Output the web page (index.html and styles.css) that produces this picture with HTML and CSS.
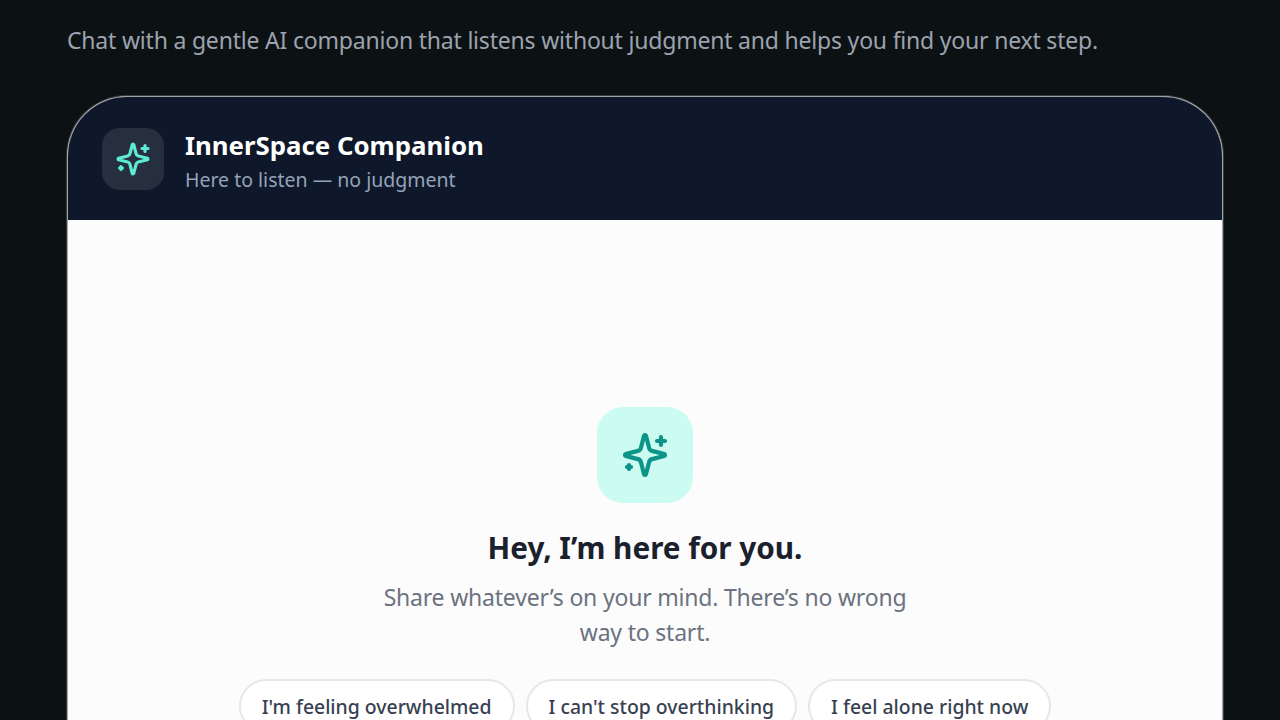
FILE: index.html
```html
<!DOCTYPE html>
<html lang="en">
<head>
<meta charset="utf-8">
<title>InnerSpace Companion</title>
<link rel="stylesheet" href="styles.css">
</head>
<body>
<main class="page">
  <p class="intro">Chat with a gentle AI companion that listens without judgment and helps you find your next step.</p>
  <section class="chat">
    <header class="chat-head">
      <div class="avatar">
        <svg class="spark" viewBox="0 0 24 24"><path d="M9.937 15.5A2 2 0 0 0 8.5 14.063l-6.135-1.582a.5.5 0 0 1 0-.962L8.5 9.936A2 2 0 0 0 9.937 8.5l1.582-6.135a.5.5 0 0 1 .963 0L14.063 8.5A2 2 0 0 0 15.5 9.937l6.135 1.581a.5.5 0 0 1 0 .964L15.5 14.063a2 2 0 0 0-1.437 1.437l-1.582 6.135a.5.5 0 0 1-.963 0z"/><path d="M20 3v4"/><path d="M22 5h-4"/><path d="M4 17v2"/><path d="M5 18H3"/></svg>
      </div>
      <div class="head-text">
        <h1 class="head-title">InnerSpace Companion</h1>
        <p class="head-sub">Here to listen — no judgment</p>
      </div>
    </header>
    <div class="chat-body">
      <div class="hero-icon">
        <svg class="spark spark-lg" viewBox="0 0 24 24"><path d="M9.937 15.5A2 2 0 0 0 8.5 14.063l-6.135-1.582a.5.5 0 0 1 0-.962L8.5 9.936A2 2 0 0 0 9.937 8.5l1.582-6.135a.5.5 0 0 1 .963 0L14.063 8.5A2 2 0 0 0 15.5 9.937l6.135 1.581a.5.5 0 0 1 0 .964L15.5 14.063a2 2 0 0 0-1.437 1.437l-1.582 6.135a.5.5 0 0 1-.963 0z"/><path d="M20 3v4"/><path d="M22 5h-4"/><path d="M4 17v2"/><path d="M5 18H3"/></svg>
      </div>
      <h2 class="hero-title">Hey, I’m here for you.</h2>
      <p class="hero-sub">Share whatever’s on your mind. There’s no wrong way to start.</p>
      <div class="chips">
        <button class="chip">I'm feeling overwhelmed</button>
        <button class="chip">I can't stop overthinking</button>
        <button class="chip">I feel alone right now</button>
      </div>
    </div>
  </section>
</main>
</body>
</html>
```
FILE: styles.css
```css
* { box-sizing: border-box; }
html, body {
  margin: 0;
  height: 720px;
  overflow: hidden;
  background: #0c1214;
  font-family: "Noto Sans", "Open Sans", sans-serif;
}
.page { padding: 22px 57px 0 67px; }
.intro {
  margin: 0 0 38px;
  font-size: 23px;
  letter-spacing: -0.2px;
  line-height: 36px;
  color: #9ca3af;
}
.chat {
  height: 800px;
  border: 1px solid #a0a3a6;
  border-bottom: 0;
  border-radius: 60px 60px 0 0;
  overflow: hidden;
  background: #fcfcfc;
  box-shadow: 0 0 0 1px rgba(160, 163, 166, 0.3);
}
.chat-head {
  height: 123px;
  padding: 0 34px;
  display: flex;
  align-items: center;
  gap: 21px;
  background: #0f172a;
}
.avatar {
  width: 62px;
  height: 62px;
  border-radius: 18px;
  background: #262f3e;
  display: flex;
  align-items: center;
  justify-content: center;
}
.spark {
  width: 36px;
  height: 36px;
  fill: none;
  stroke: #5eead4;
  stroke-width: 2.1;
  stroke-linecap: round;
  stroke-linejoin: round;
}
.spark-lg { width: 48px; height: 48px; stroke: #0d9488; }
.head-text { padding-top: 7px; }
.head-title {
  margin: 0;
  font-size: 25.8px;
  line-height: 35px;
  font-weight: 700;
  color: #fff;
}
.head-sub {
  margin: 1px 0 0;
  font-size: 19.5px;
  line-height: 32px;
  color: #94a3b8;
}
.chat-body {
  padding-top: 187px;
  display: flex;
  flex-direction: column;
  align-items: center;
}
.hero-icon {
  width: 96px;
  height: 96px;
  border-radius: 26px;
  background: #ccfbf1;
  display: flex;
  align-items: center;
  justify-content: center;
}
.hero-title {
  margin: 24px 0 0;
  font-size: 29.7px;
  line-height: 42px;
  font-weight: 700;
  color: #1a202c;
}
.hero-sub {
  margin: 11px 0 0;
  width: 540px;
  font-size: 23px;
  letter-spacing: -0.2px;
  line-height: 34.5px;
  text-align: center;
  color: #6b7280;
}
.chips {
  margin-top: 30px;
  display: flex;
  gap: 11px;
}
.chip {
  height: 54px;
  padding: 0 21px;
  border: 2px solid #e5e7eb;
  border-radius: 27px;
  background: #fff;
  font: 500 19.4px "Noto Sans", sans-serif;
  color: #374151;
}
```
